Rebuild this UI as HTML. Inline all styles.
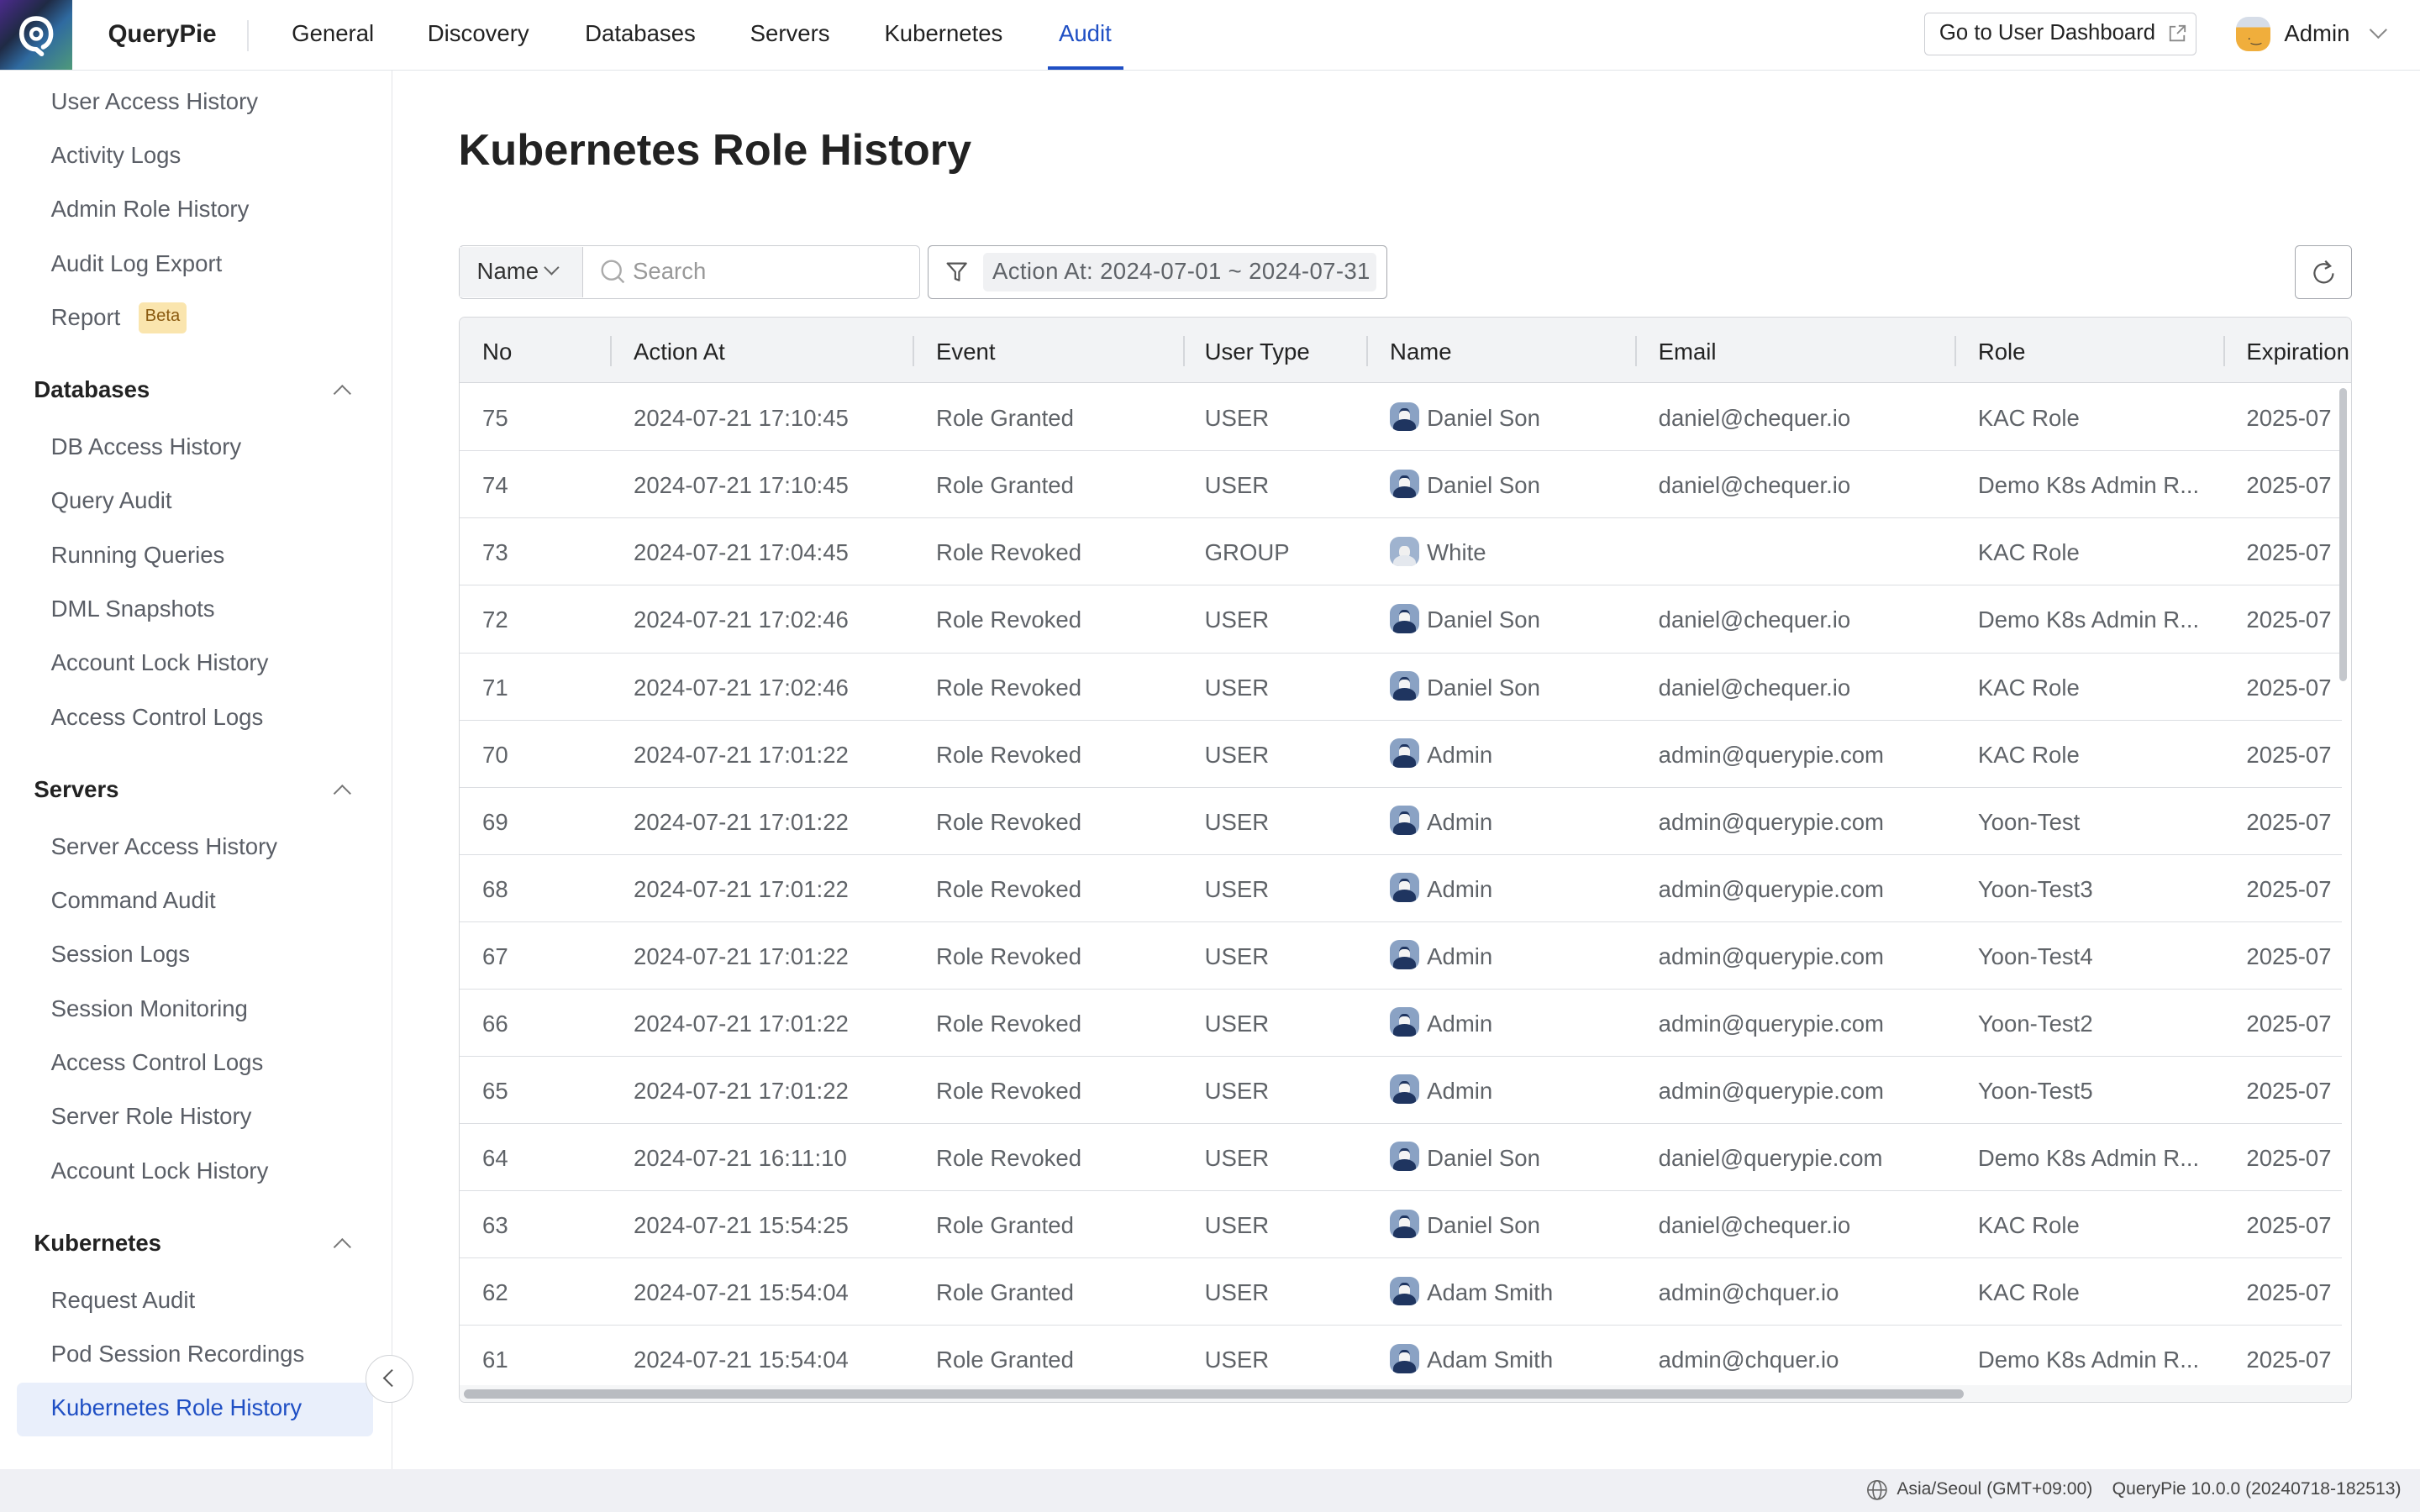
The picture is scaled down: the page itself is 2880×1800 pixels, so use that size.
<!DOCTYPE html>
<html><head><meta charset="utf-8">
<style>
*{box-sizing:border-box;margin:0;padding:0}
html,body{width:2880px;height:1800px;overflow:hidden;background:#fff}
#root{zoom:1.83673;width:1568px;height:980px;position:relative;font-family:"Liberation Sans",sans-serif;color:#5f6368;font-size:15px}
.abs{position:absolute}
.hdr{left:0;top:0;width:1568px;height:46px;border-bottom:1px solid #e2e4e8;background:#fff}
.logo{left:0;top:0;width:47px;height:45px;background:linear-gradient(135deg,#4b2b8c 0%,#1f2a44 35%,#2f6aa0 60%,#4f9a7a 100%)}
.nav{top:13px;font-size:15px;color:#222}
.side{left:0;top:46px;width:254px;height:906px;border-right:1px solid #e2e4e8}
.si{left:33px;font-size:15px;color:#5a5e66}
.sh{left:22px;font-size:15px;color:#222;font-weight:600}
.chev{left:218px;width:8px;height:8px;border-left:1.3px solid #777;border-top:1.3px solid #777;transform:rotate(45deg)}
.table{left:297px;top:205px;width:1227px;height:704px;border:1px solid #d5d7db;border-radius:4px;overflow:hidden}
.th{top:0;left:0;width:1227px;height:43px;background:#f2f3f5;border-bottom:1px solid #d5d7db}
.hc{top:14px;font-size:15px;color:#222}
.sep{top:12px;width:1px;height:20px;background:#d5d7db}
.row{left:0;width:1220px;height:44px;border-bottom:1px solid #dcdee2}
.c{top:14px;white-space:nowrap;font-size:15px;color:#5f6368}
.av{top:12px;width:19px;height:19px;border-radius:6px;background:#8aa2c4;overflow:hidden}
.av:after{content:"";position:absolute;left:2px;top:11px;width:15px;height:10px;border-radius:50% 50% 0 0;background:#1f3560}
.av:before{content:"";position:absolute;left:6px;top:4px;width:7px;height:8px;border-radius:40%;background:#f4f4f4;border-top:2px solid #1f3560}
.avg{background:#9fb3cf}
.avg:after{background:#e4e8ee;top:12px}
.avg:before{background:#f0f0f0;border-top:none;top:6px}
</style></head><body><div id="root">
<div class="abs hdr"></div>
<div class="abs logo"><svg width="47" height="45" viewBox="0 0 47 45"><path d="M23.5 12 C17 12 14 16.5 14 22 C14 27.5 18 32 23.5 32 L27 35 M23.5 12 C30 12 33 16.5 33 22 C33 26 31 29 28 30.5" fill="none" stroke="#fff" stroke-width="3" stroke-linecap="round" stroke-linejoin="round"/><circle cx="23.5" cy="22" r="3.3" fill="none" stroke="#fff" stroke-width="2.4"/></svg></div>
<div class="abs" style="left:70px;top:13px;font-size:16px;font-weight:600;color:#222">QueryPie</div>
<div class="abs" style="left:160px;top:13px;width:1px;height:20px;background:#e2e4e8"></div>
<div class="abs nav" style="left:189px">General</div>
<div class="abs nav" style="left:277px">Discovery</div>
<div class="abs nav" style="left:379px">Databases</div>
<div class="abs nav" style="left:486px">Servers</div>
<div class="abs nav" style="left:573px">Kubernetes</div>
<div class="abs nav" style="left:686px;color:#1f4fc4">Audit</div>
<div class="abs" style="left:679px;top:43px;width:49px;height:2px;background:#1f4fc4"></div>
<div class="abs" style="left:1247px;top:8px;width:176px;height:28px;border:1px solid #ccced3;border-radius:3px;font-size:14px;color:#222;padding:5px 0 0 9px">Go to User Dashboard
<svg class="abs" style="left:157px;top:7px" width="12" height="12" viewBox="0 0 12 12"><path d="M5 1.5H1.5V10.5H10.5V7 M7 1H11V5 M11 1L6 6" fill="none" stroke="#888" stroke-width="1"/></svg></div>
<div class="abs" style="left:1449px;top:11px;width:22px;height:22px;border-radius:8px;background:linear-gradient(#d6dde8 0 30%,#f0ae3c 30%)"></div>
<div class="abs" style="left:1456px;top:20px;font-size:8px;color:#333">·‿</div>
<div class="abs" style="left:1480px;top:13px;font-size:15px;color:#222">Admin</div>
<div class="abs" style="left:1537px;top:15px;width:8px;height:8px;border-right:1.2px solid #888;border-bottom:1.2px solid #888;transform:rotate(45deg)"></div>

<div class="abs side"></div>
<div class="abs si" style="top:57px">User Access History</div>
<div class="abs si" style="top:92px">Activity Logs</div>
<div class="abs si" style="top:127px">Admin Role History</div>
<div class="abs si" style="top:162px">Audit Log Export</div>
<div class="abs si" style="top:197px">Report</div>
<div class="abs" style="left:90px;top:196px;width:31px;height:20px;border-radius:3px;background:#fae5ae;color:#8a5a10;font-size:11px;padding:3px 0 0 4px">Beta</div>
<div class="abs sh" style="top:244px">Databases</div><div class="abs chev" style="top:251px"></div>
<div class="abs si" style="top:281px">DB Access History</div>
<div class="abs si" style="top:316px">Query Audit</div>
<div class="abs si" style="top:351px">Running Queries</div>
<div class="abs si" style="top:386px">DML Snapshots</div>
<div class="abs si" style="top:421px">Account Lock History</div>
<div class="abs si" style="top:456px">Access Control Logs</div>
<div class="abs sh" style="top:503px">Servers</div><div class="abs chev" style="top:510px"></div>
<div class="abs si" style="top:540px">Server Access History</div>
<div class="abs si" style="top:575px">Command Audit</div>
<div class="abs si" style="top:610px">Session Logs</div>
<div class="abs si" style="top:645px">Session Monitoring</div>
<div class="abs si" style="top:680px">Access Control Logs</div>
<div class="abs si" style="top:715px">Server Role History</div>
<div class="abs si" style="top:750px">Account Lock History</div>
<div class="abs sh" style="top:797px">Kubernetes</div><div class="abs chev" style="top:804px"></div>
<div class="abs si" style="top:834px">Request Audit</div>
<div class="abs si" style="top:869px">Pod Session Recordings</div>
<div class="abs" style="left:11px;top:896px;width:231px;height:35px;background:#e9effb;border-radius:4px"></div>
<div class="abs si" style="top:904px;color:#1f4fc4">Kubernetes Role History</div>
<div class="abs" style="left:237px;top:878px;width:31px;height:31px;border-radius:50%;border:1px solid #d0d2d6;background:#fff"></div>
<div class="abs" style="left:250px;top:889px;width:8px;height:8px;border-left:1.3px solid #555;border-bottom:1.3px solid #555;transform:rotate(45deg)"></div>

<div class="abs" style="left:297px;top:81px;font-size:28.5px;font-weight:600;color:#222">Kubernetes Role History</div>

<div class="abs" style="left:297px;top:159px;width:299px;height:35px;border:1px solid #ccced3;border-radius:3px"></div>
<div class="abs" style="left:298px;top:160px;width:80px;height:33px;background:#f2f3f5;border-right:1px solid #ccced3"></div>
<div class="abs" style="left:309px;top:167px;color:#333">Name</div>
<div class="abs" style="left:354px;top:170px;width:7px;height:7px;border-right:1.1px solid #666;border-bottom:1.1px solid #666;transform:rotate(45deg)"></div>
<svg class="abs" style="left:388px;top:167px" width="18" height="18" viewBox="0 0 18 18"><circle cx="8" cy="8" r="6" fill="none" stroke="#aaa" stroke-width="1.3"/><path d="M12.5 12.5L16 16" stroke="#aaa" stroke-width="1.3"/></svg>
<div class="abs" style="left:410px;top:167px;color:#999">Search</div>
<div class="abs" style="left:601px;top:159px;width:298px;height:35px;border:1px solid #a5a8ae;border-radius:3px"></div>
<svg class="abs" style="left:612px;top:168px" width="16" height="16" viewBox="0 0 16 16"><path d="M2 2.5H14L9.5 8V13.5L7 12.5V8Z" fill="none" stroke="#555" stroke-width="1.2" stroke-linejoin="round"/></svg>
<div class="abs" style="left:637px;top:164px;width:255px;height:25px;background:#f0f1f3;border-radius:3px"></div>
<div class="abs" style="left:643px;top:167px;color:#5f6368;letter-spacing:0.2px">Action At: 2024-07-01 ~ 2024-07-31</div>
<div class="abs" style="left:1487px;top:159px;width:37px;height:35px;border:1px solid #a5a8ae;border-radius:3px"></div>
<svg class="abs" style="left:1496px;top:167px" width="19" height="19" viewBox="0 0 19 19"><path d="M13.5 5.5A6 6 0 1 0 15.5 10" fill="none" stroke="#555" stroke-width="1.2"/><path d="M10.5 2L13.7 5.3L10.3 7" fill="none" stroke="#555" stroke-width="1.2"/></svg>

<div class="abs table">
<div class="abs th"></div>
<div class="abs hc" style="left:15px">No</div>
<div class="abs sep" style="left:98px"></div><div class="abs hc" style="left:113px">Action At</div>
<div class="abs sep" style="left:294px"></div><div class="abs hc" style="left:309px">Event</div>
<div class="abs sep" style="left:469px"></div><div class="abs hc" style="left:483px">User Type</div>
<div class="abs sep" style="left:588px"></div><div class="abs hc" style="left:603px">Name</div>
<div class="abs sep" style="left:762px"></div><div class="abs hc" style="left:777px">Email</div>
<div class="abs sep" style="left:969px"></div><div class="abs hc" style="left:984px">Role</div>
<div class="abs sep" style="left:1143px"></div><div class="abs hc" style="left:1158px">Expiration</div>
<div id="rows"></div>
<div class="abs" style="left:1218px;top:46px;width:5px;height:190px;border-radius:3px;background:#c4c7cc"></div>
<div class="abs" style="left:0;top:692px;width:1227px;height:12px;background:#f5f6f7"></div>
<div class="abs" style="left:3px;top:695px;width:972px;height:6px;border-radius:3px;background:#b9bcc1"></div>
</div>

<div class="abs" style="left:0;top:952px;width:1568px;height:28px;background:#eff0f4"></div>
<svg class="abs" style="left:1209px;top:959px" width="14" height="14" viewBox="0 0 14 14"><circle cx="7" cy="7" r="6" fill="none" stroke="#666" stroke-width="0.9"/><ellipse cx="7" cy="7" rx="2.6" ry="6" fill="none" stroke="#666" stroke-width="0.9"/><path d="M1 7H13" stroke="#666" stroke-width="0.9"/></svg>
<div class="abs" style="left:1229px;top:959px;font-size:11.5px;color:#444;white-space:nowrap">Asia/Seoul (GMT+09:00)&nbsp;&nbsp;&nbsp;&nbsp;QueryPie 10.0.0 (20240718-182513)</div>
</div>
<script>
var d=[["75","2024-07-21 17:10:45","Role Granted","USER","Daniel Son","daniel@chequer.io","KAC Role"],
["74","2024-07-21 17:10:45","Role Granted","USER","Daniel Son","daniel@chequer.io","Demo K8s Admin R..."],
["73","2024-07-21 17:04:45","Role Revoked","GROUP","White","","KAC Role"],
["72","2024-07-21 17:02:46","Role Revoked","USER","Daniel Son","daniel@chequer.io","Demo K8s Admin R..."],
["71","2024-07-21 17:02:46","Role Revoked","USER","Daniel Son","daniel@chequer.io","KAC Role"],
["70","2024-07-21 17:01:22","Role Revoked","USER","Admin","admin@querypie.com","KAC Role"],
["69","2024-07-21 17:01:22","Role Revoked","USER","Admin","admin@querypie.com","Yoon-Test"],
["68","2024-07-21 17:01:22","Role Revoked","USER","Admin","admin@querypie.com","Yoon-Test3"],
["67","2024-07-21 17:01:22","Role Revoked","USER","Admin","admin@querypie.com","Yoon-Test4"],
["66","2024-07-21 17:01:22","Role Revoked","USER","Admin","admin@querypie.com","Yoon-Test2"],
["65","2024-07-21 17:01:22","Role Revoked","USER","Admin","admin@querypie.com","Yoon-Test5"],
["64","2024-07-21 16:11:10","Role Revoked","USER","Daniel Son","daniel@querypie.com","Demo K8s Admin R..."],
["63","2024-07-21 15:54:25","Role Granted","USER","Daniel Son","daniel@chequer.io","KAC Role"],
["62","2024-07-21 15:54:04","Role Granted","USER","Adam Smith","admin@chquer.io","KAC Role"],
["61","2024-07-21 15:54:04","Role Granted","USER","Adam Smith","admin@chquer.io","Demo K8s Admin R..."]];
var h="";d.forEach(function(r,i){var t=43+i*43.6;
h+='<div class="abs row" style="top:'+t+'px">'+
'<div class="abs c" style="left:15px">'+r[0]+'</div>'+
'<div class="abs c" style="left:113px">'+r[1]+'</div>'+
'<div class="abs c" style="left:309px">'+r[2]+'</div>'+
'<div class="abs c" style="left:483px">'+r[3]+'</div>'+
'<div class="abs av'+(r[3]=="GROUP"?" avg":"")+'" style="left:603px"></div>'+
'<div class="abs c" style="left:627px">'+r[4]+'</div>'+
'<div class="abs c" style="left:777px">'+r[5]+'</div>'+
'<div class="abs c" style="left:984px">'+r[6]+'</div>'+
'<div class="abs c" style="left:1158px">2025-07</div></div>';});
document.getElementById("rows").innerHTML=h;
</script>
</body></html>
